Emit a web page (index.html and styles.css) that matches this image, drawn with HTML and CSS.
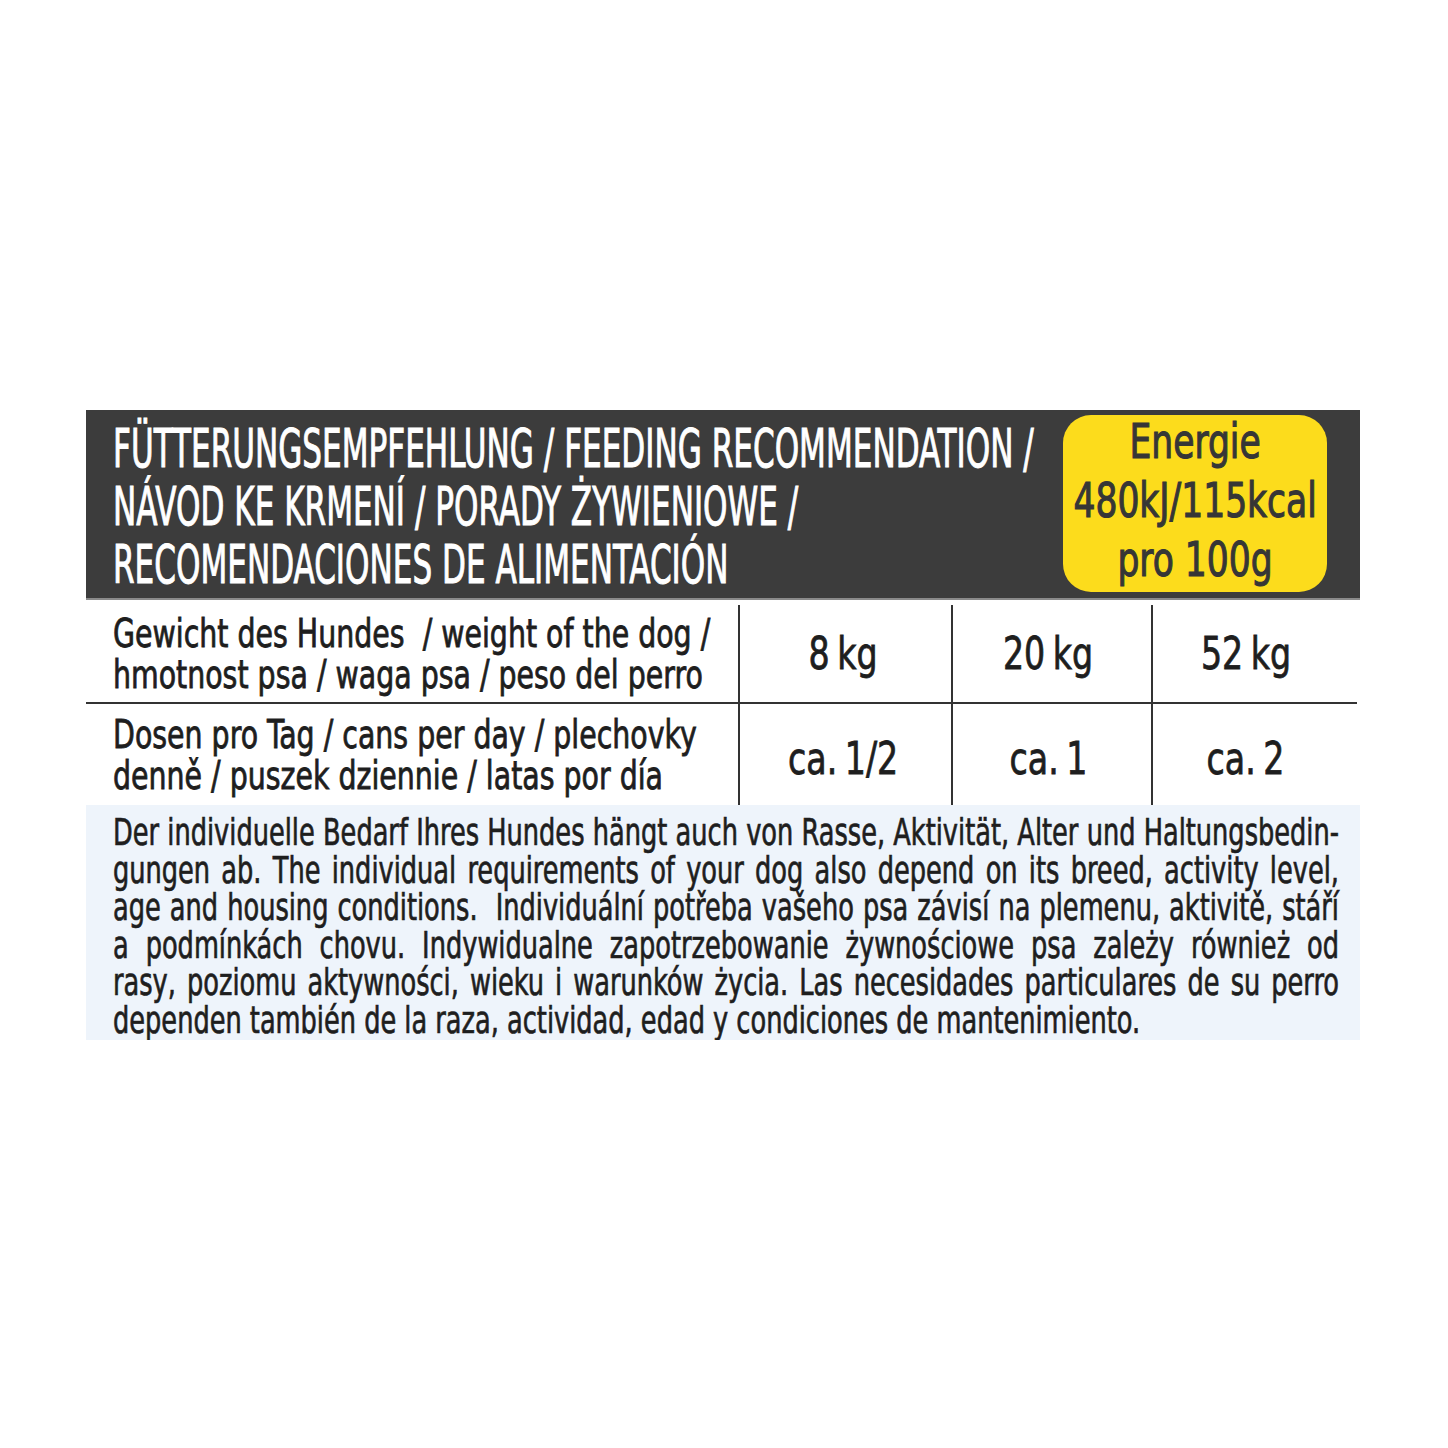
FILE: index.html
```html
<!DOCTYPE html>
<html lang="de">
<head>
<meta charset="utf-8">
<title>Fütterungsempfehlung</title>
<link rel="stylesheet" href="styles.css">
</head>
<body>
<div class="page">
  <div class="label">
    <div class="head">
      <div class="title">
        <div class="ln"><span>FÜTTERUNGSEMPFEHLUNG / FEEDING RECOMMENDATION /</span></div>
        <div class="ln"><span>NÁVOD KE KRMENÍ / PORADY ŻYWIENIOWE /</span></div>
        <div class="ln"><span>RECOMENDACIONES DE ALIMENTACIÓN</span></div>
      </div>
      <div class="energy">
        <div class="eln"><span>Energie</span></div>
        <div class="eln"><span>480kJ/115kcal</span></div>
        <div class="eln"><span>pro 100g</span></div>
      </div>
    </div>
    <div class="row row-weight">
      <div class="cell cell-label">
        <div class="lln"><span>Gewicht des Hundes&nbsp; / weight of the dog /</span></div>
        <div class="lln"><span>hmotnost psa / waga psa / peso del perro</span></div>
      </div>
      <div class="cell cell-val col-1"><span>8 kg</span></div>
      <div class="cell cell-val col-2"><span>20 kg</span></div>
      <div class="cell cell-val col-3"><span>52 kg</span></div>
    </div>
    <div class="row row-cans">
      <div class="cell cell-label">
        <div class="lln"><span>Dosen pro Tag / cans per day / plechovky</span></div>
        <div class="lln"><span>denně / puszek dziennie / latas por día</span></div>
      </div>
      <div class="cell cell-val col-1"><span>ca. 1/2</span></div>
      <div class="cell cell-val col-2"><span>ca. 1</span></div>
      <div class="cell cell-val col-3"><span>ca. 2</span></div>
    </div>
    <div class="note">
      <div class="nln"><span>Der individuelle Bedarf Ihres Hundes hängt auch von Rasse, Aktivität, Alter und Haltungsbedin-</span></div>
      <div class="nln"><span>gungen ab. The individual requirements of your dog also depend on its breed, activity level,</span></div>
      <div class="nln"><span>age and housing conditions.&nbsp; Individuální potřeba vašeho psa závisí na plemenu, aktivitě, stáří</span></div>
      <div class="nln"><span>a podmínkách chovu. Indywidualne zapotrzebowanie żywnościowe psa zależy również od</span></div>
      <div class="nln"><span>rasy, poziomu aktywności, wieku i warunków życia. Las necesidades particulares de su perro</span></div>
      <div class="nln nln-last"><span>dependen también de la raza, actividad, edad y condiciones de mantenimiento.</span></div>
    </div>
  </div>
</div>
</body>
</html>
```
FILE: styles.css
```css
html, body {
  margin: 0;
  padding: 0;
  background: #ffffff;
}
body {
  font-family: "DejaVu Sans Condensed", "Liberation Sans Narrow", "Liberation Sans", sans-serif;
  color: #1e1e1e;
}
.page {
  padding: 410px 0 0 86px;
}
.label {
  width: 1274px;
  overflow: hidden;
}

/* header band */
.head {
  height: 188px;
  background: #3c3c3c;
  display: flex;
  border-bottom: 2px solid #8a8a8a;
}
.title {
  flex: 1 1 auto;
  min-width: 0;
  padding: 10px 0 0 27px;
  color: #ffffff;
  font-size: 54px;
  line-height: 58px;
  -webkit-text-stroke: 1px #ffffff;
}
.ln {
  white-space: nowrap;
}
.ln span {
  display: inline-block;
  transform: scaleX(0.64);
  transform-origin: 0 50%;
}
.energy {
  flex: 0 0 264px;
  width: 264px;
  min-width: 0;
  margin: 5px 33px 0 0;
  height: 177px;
  box-sizing: border-box;
  padding-bottom: 6px;
  display: flex;
  flex-direction: column;
  justify-content: center;
  background: #fcdc1c;
  border-radius: 28px;
  color: #363636;
  font-size: 48px;
  line-height: 59px;
  -webkit-text-stroke: 1.1px #363636;
}
.eln {
  display: flex;
  justify-content: center;
  white-space: nowrap;
  flex: none;
}
.eln span {
  display: inline-block;
  flex: none;
  transform: scaleX(0.8);
  transform-origin: 50% 50%;
}

/* table rows */
.row {
  display: grid;
  grid-template-columns: 652px 213px 200px 209px;
}
.row-weight {
  margin-top: 5px;
  height: 97px;
  border-bottom: 2px solid #333333;
  margin-right: 3px;
}
.row-cans {
  height: 101px;
}
.cell {
  display: flex;
  flex-direction: column;
  justify-content: center;
}
.cell-label {
  padding-left: 27px;
  font-size: 39px;
  line-height: 41px;
  -webkit-text-stroke: 0.8px #1e1e1e;
}
.lln {
  white-space: nowrap;
}
.lln span {
  display: inline-block;
  transform: scaleX(0.81);
  transform-origin: 0 50%;
}
.cell-val {
  border-left: 2px solid #333333;
  align-items: center;
  font-size: 45px;
  white-space: nowrap;
  word-spacing: -0.08em;
  -webkit-text-stroke: 0.8px #1e1e1e;
}
.col-1 {
  padding-right: 4px;
}
.col-2 {
  padding-right: 8px;
}
.col-3 {
  padding-right: 22px;
}
.row-cans .cell-val {
  padding-top: 8px;
}
.cell-val span {
  display: inline-block;
  transform: scaleX(0.82);
}

/* note */
.note {
  height: 235px;
  box-sizing: border-box;
  padding: 9px 0 0 27px;
  background: #eef4fb;
  font-size: 38px;
  line-height: 37.5px;
  -webkit-text-stroke: 0.7px #1e1e1e;
}
.nln span {
  display: block;
  width: calc(1226px / 0.75);
  white-space: nowrap;
  text-align: justify;
  text-align-last: justify;
  transform: scaleX(0.75);
  transform-origin: 0 50%;
}
.nln-last span {
  width: auto;
  text-align: left;
  text-align-last: auto;
}
```
